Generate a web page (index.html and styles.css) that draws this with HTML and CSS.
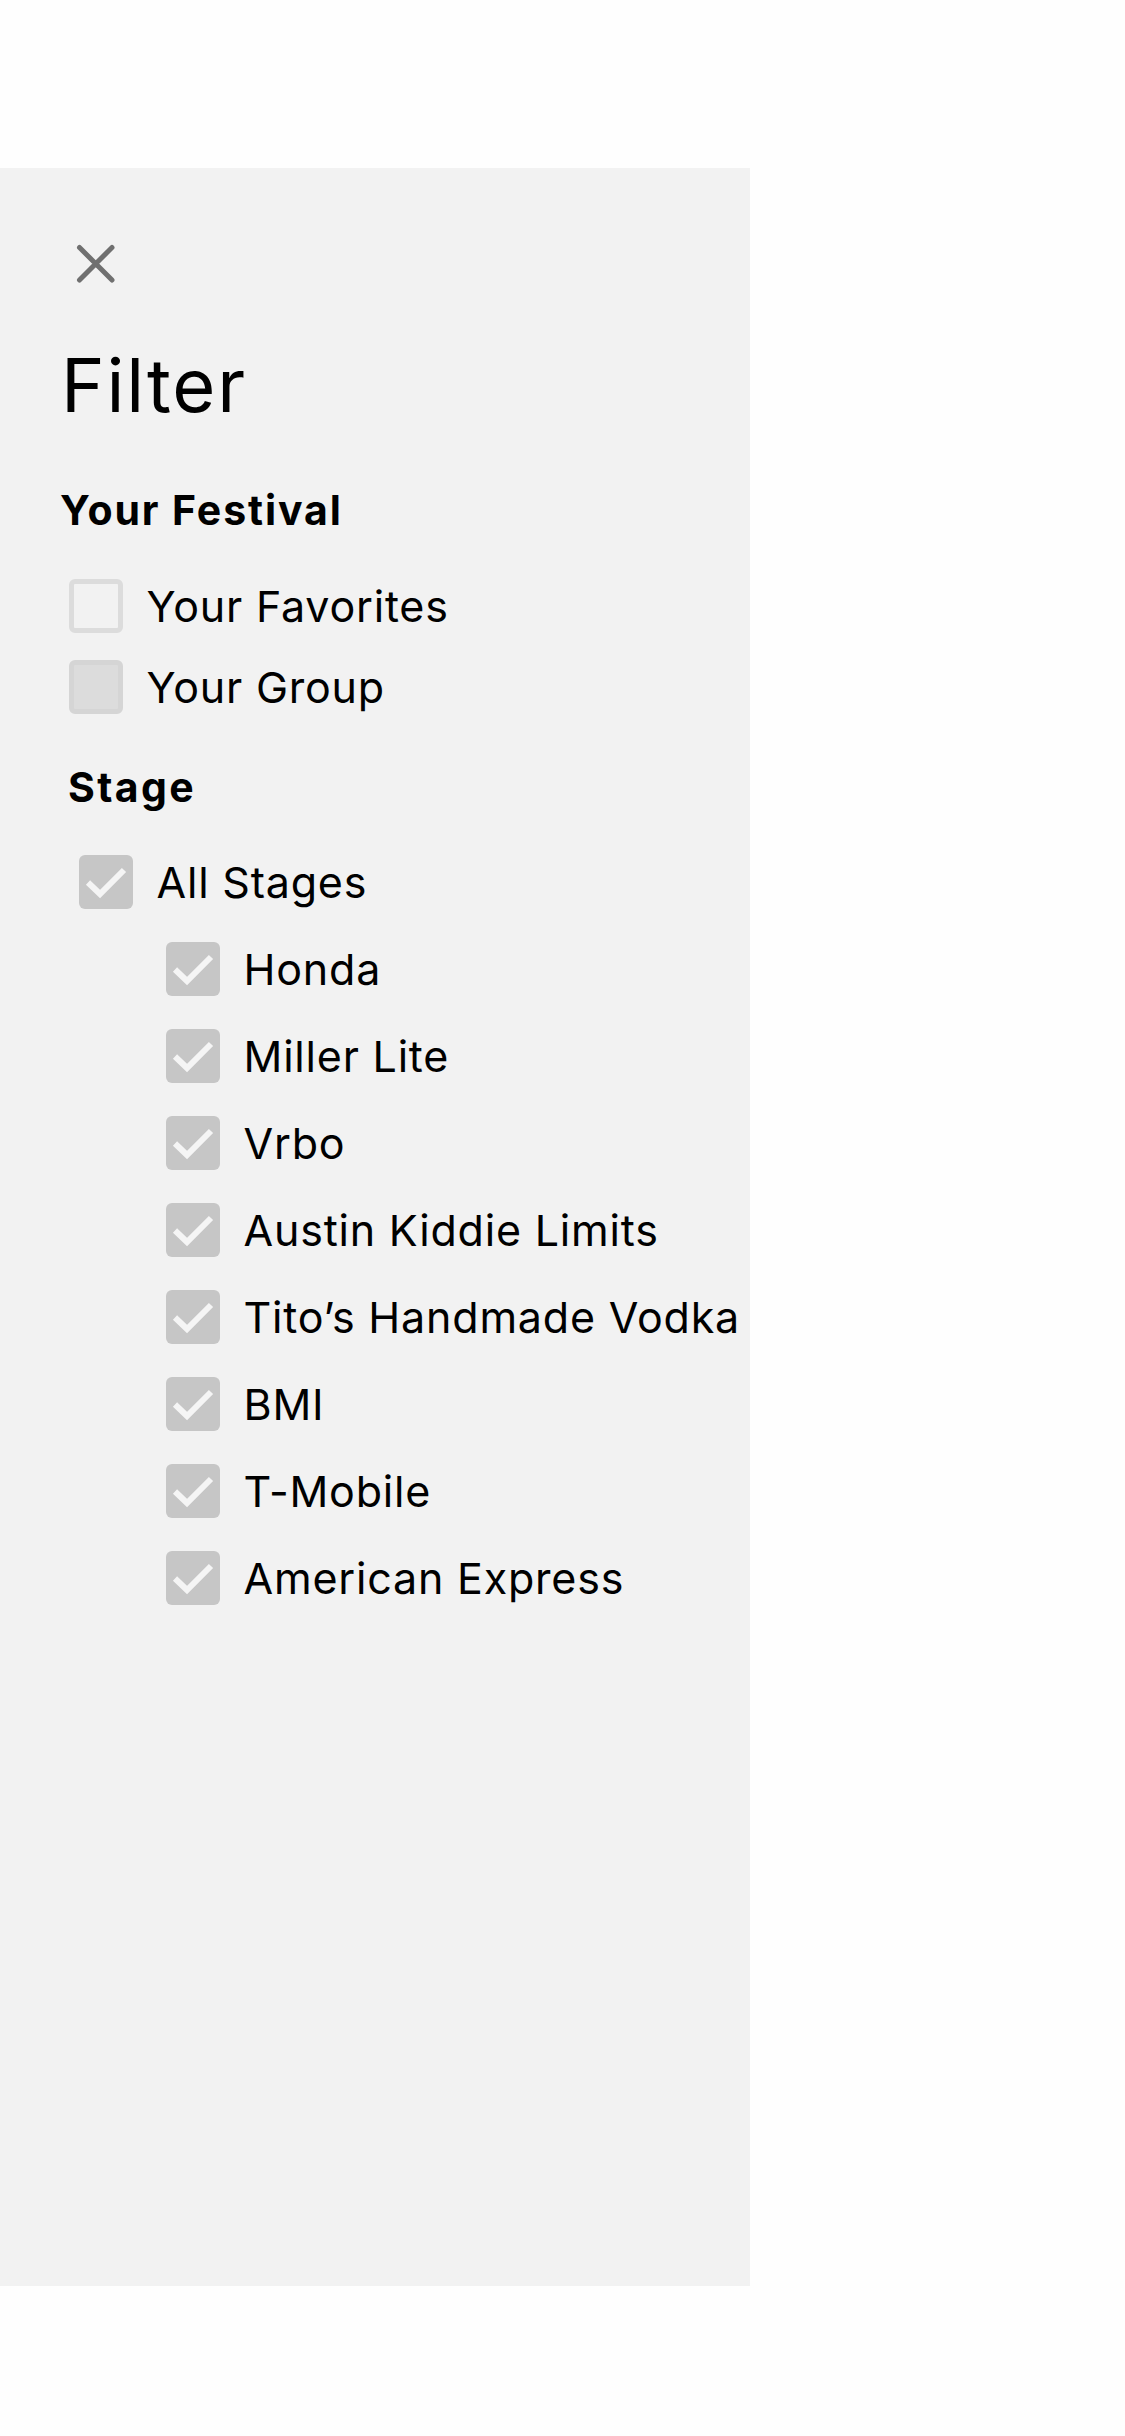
FILE: index.html
```html
<!DOCTYPE html>
<html lang="en">
<head>
<meta charset="utf-8">
<title>Filter</title>
<link rel="stylesheet" href="styles.css">
</head>
<body>
<div class="page">
  <aside class="panel">
    <button class="close" aria-label="Close">
      <svg width="40" height="40" viewBox="0 0 40 40"><path d="M3.5 3.5 L36 36 M36 3.5 L3.5 36" stroke="#707070" stroke-width="5" stroke-linecap="round" fill="none"/></svg>
    </button>
    <h1 class="title">Filter</h1>

    <h2 class="heading festival-heading">Your Festival</h2>
    <div class="group festival-group">
      <label class="row"><span class="box box-empty"></span><span class="label">Your Favorites</span></label>
      <label class="row"><span class="box box-disabled"></span><span class="label">Your Group</span></label>
    </div>

    <h2 class="heading stage-heading">Stage</h2>
    <div class="group stage-group">
      <label class="row row-all"><span class="box box-checked"><svg width="54" height="54" viewBox="0 0 54 54"><polyline points="9,27.5 21,39 45,15" fill="none" stroke="#f5f5f5" stroke-width="6"/></svg></span><span class="label">All Stages</span></label>
      <label class="row row-sub"><span class="box box-checked"><svg width="54" height="54" viewBox="0 0 54 54"><polyline points="9,27.5 21,39 45,15" fill="none" stroke="#f5f5f5" stroke-width="6"/></svg></span><span class="label">Honda</span></label>
      <label class="row row-sub"><span class="box box-checked"><svg width="54" height="54" viewBox="0 0 54 54"><polyline points="9,27.5 21,39 45,15" fill="none" stroke="#f5f5f5" stroke-width="6"/></svg></span><span class="label">Miller Lite</span></label>
      <label class="row row-sub"><span class="box box-checked"><svg width="54" height="54" viewBox="0 0 54 54"><polyline points="9,27.5 21,39 45,15" fill="none" stroke="#f5f5f5" stroke-width="6"/></svg></span><span class="label">Vrbo</span></label>
      <label class="row row-sub"><span class="box box-checked"><svg width="54" height="54" viewBox="0 0 54 54"><polyline points="9,27.5 21,39 45,15" fill="none" stroke="#f5f5f5" stroke-width="6"/></svg></span><span class="label">Austin Kiddie Limits</span></label>
      <label class="row row-sub"><span class="box box-checked"><svg width="54" height="54" viewBox="0 0 54 54"><polyline points="9,27.5 21,39 45,15" fill="none" stroke="#f5f5f5" stroke-width="6"/></svg></span><span class="label">Tito’s Handmade Vodka</span></label>
      <label class="row row-sub"><span class="box box-checked"><svg width="54" height="54" viewBox="0 0 54 54"><polyline points="9,27.5 21,39 45,15" fill="none" stroke="#f5f5f5" stroke-width="6"/></svg></span><span class="label">BMI</span></label>
      <label class="row row-sub"><span class="box box-checked"><svg width="54" height="54" viewBox="0 0 54 54"><polyline points="9,27.5 21,39 45,15" fill="none" stroke="#f5f5f5" stroke-width="6"/></svg></span><span class="label">T-Mobile</span></label>
      <label class="row row-sub"><span class="box box-checked"><svg width="54" height="54" viewBox="0 0 54 54"><polyline points="9,27.5 21,39 45,15" fill="none" stroke="#f5f5f5" stroke-width="6"/></svg></span><span class="label">American Express</span></label>
    </div>
  </aside>
</div>
</body>
</html>
```

FILE: styles.css
```css
* { box-sizing: border-box; }

html, body {
  margin: 0;
  padding: 0;
  background: #fefefe;
}

body {
  font-family: Inter, "Noto Sans", sans-serif;
  color: #000;
}

.page {
  width: 1125px;
  height: 2436px;
  padding-top: 168px;
}

.panel {
  width: 750px;
  height: 2118px;
  background: #f2f2f2;
  padding: 76px 0 0 60px;
  display: flex;
  flex-direction: column;
  align-items: flex-start;
  overflow: hidden;
}

.close {
  display: block;
  margin: 0 0 0 16px;
  padding: 0;
  border: 0;
  background: none;
  width: 40px;
  height: 40px;
}

.close svg { display: block; }

.title {
  margin: 61px 0 0 1px;
  font-size: 74px;
  font-weight: 400;
  line-height: 80px;
  letter-spacing: 1.8px;
}

.heading {
  margin: 0;
  font-size: 41px;
  font-weight: 700;
  line-height: 50px;
  letter-spacing: 1.9px;
}

.festival-heading { margin-top: 60px; }

.stage-heading { margin-top: 48px; margin-left: 8px; letter-spacing: 2.4px; }

.group {
  display: flex;
  flex-direction: column;
  align-items: flex-start;
}

.festival-group {
  margin-top: 44px;
  margin-left: 9px;
  gap: 27px;
}

.stage-group {
  margin-top: 43px;
  gap: 33px;
}

.row {
  display: flex;
  align-items: center;
  gap: 23.5px;
  white-space: nowrap;
}

.row-all { margin-left: 19px; }
.row-sub { margin-left: 106px; }

.label {
  font-size: 43px;
  line-height: 54px;
  font-weight: 400;
  letter-spacing: 0.8px;
}

.box {
  flex: none;
  width: 54px;
  height: 54px;
  border-radius: 6px;
  display: block;
}

.box svg { display: block; }

.box-empty {
  background: #f2f2f2;
  border: 5px solid #dcdcdc;
}

.box-disabled {
  background: #dcdcdc;
  border: 5px solid #d5d5d5;
}

.box-checked {
  background: #c6c6c6;
}
```
